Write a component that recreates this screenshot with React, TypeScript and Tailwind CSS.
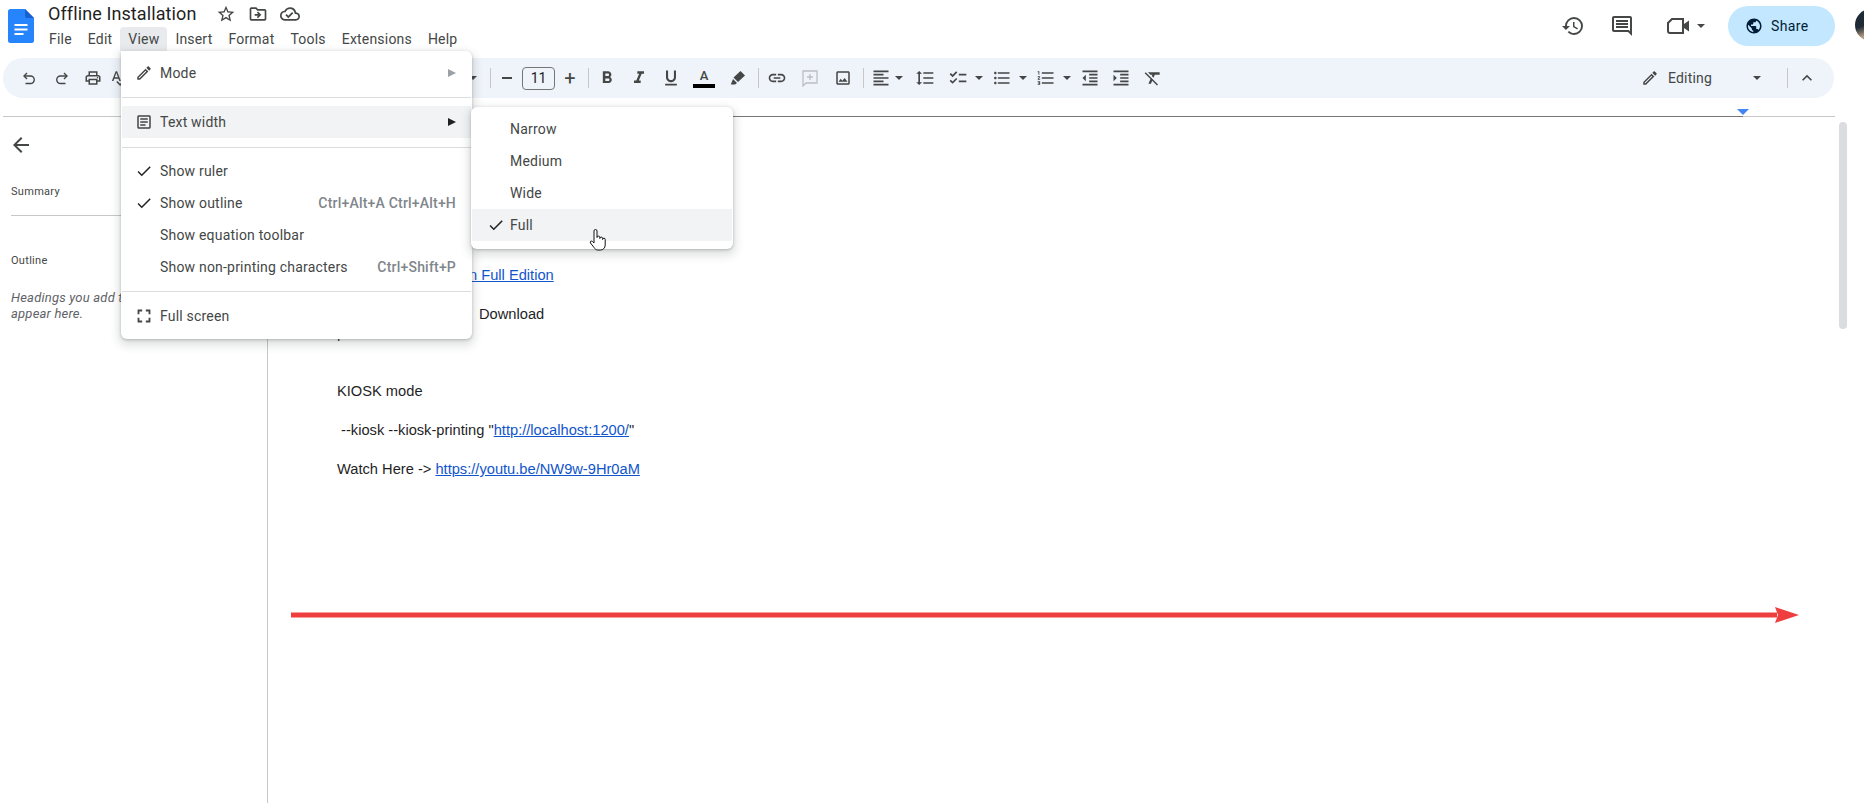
import type { ReactNode } from 'react';
import {
  MdArrowBack,
  MdCheck,
  MdChecklist,
  MdExpandLess,
  MdFormatAlignLeft,
  MdFormatBold,
  MdFormatClear,
  MdFormatIndentDecrease,
  MdFormatIndentIncrease,
  MdFormatItalic,
  MdFormatLineSpacing,
  MdFormatListBulleted,
  MdFormatListNumbered,
  MdFormatUnderlined,
  MdFullscreen,
  MdHistory,
  MdLink,
  MdOutlineArticle,
  MdOutlineCloudDone,
  MdOutlineComment,
  MdOutlineDriveFileMove,
  MdOutlineEdit,
  MdOutlineImage,
  MdOutlinePrint,
  MdPublic,
  MdSpellcheck,
  MdStarBorder,
} from 'react-icons/md';

const menus = ['File', 'Edit', 'View', 'Insert', 'Format', 'Tools', 'Extensions', 'Help'];

function DocsLogo() {
  return (
    <svg width="26" height="34" viewBox="0 0 26 34">
      <path d="M2.5 0H17l9 9v22.5a2.5 2.5 0 0 1-2.5 2.5h-21A2.5 2.5 0 0 1 0 31.5v-29A2.5 2.5 0 0 1 2.5 0z" fill="#2684fc" />
      <path d="M17 0l9 9h-7a2 2 0 0 1-2-2z" fill="#1a5fd0" />
      <path d="M6.5 15h13v2h-13zM6.5 19.5h13v2h-13zM6.5 24h9v2h-9z" fill="#fff" />
    </svg>
  );
}

function UndoIcon({ flip }: { flip?: boolean }) {
  return (
    <svg width="14" height="13" viewBox="0 0 14 13" fill="none" stroke="#444746" strokeWidth="1.4" className={flip ? '-scale-x-100' : ''}>
      <path d="M5 1L2 4l3 3" />
      <path d="M2 4h6.500a3.750 3.750 0 0 1 0 7.500H3.500" />
    </svg>
  );
}

function VideoIcon() {
  return (
    <svg width="22" height="16" viewBox="0 0 22 16" fill="none">
      <path d="M5 1h11v14H3a2 2 0 0 1-2-2V5z" stroke="#444746" strokeWidth="2" />
      <path d="M17 6l5-3.500v11L17 10z" fill="#444746" />
    </svg>
  );
}

function AddCommentIcon() {
  return (
    <svg width="16" height="17" viewBox="0 0 16 17" fill="none" stroke="#bcc0c4" strokeWidth="1.300">
      <path d="M1 1h14v12H4l-3 3z" />
      <path d="M8 4v6M5 7h6" />
    </svg>
  );
}

function Caret({ className = '' }: { className?: string }) {
  return (
    <svg width="8" height="4" viewBox="0 0 8 4" className={className}>
      <path d="M0 0h8L4 4z" fill="#444746" />
    </svg>
  );
}

function Slot({ className, children }: { className: string; children?: ReactNode }) {
  return <div className={`flex h-full shrink-0 items-center justify-center ${className}`}>{children}</div>;
}

function Sep({ className = '' }: { className?: string }) {
  return <div className={`h-5 w-px shrink-0 bg-[#c7c7c7] ${className}`} />;
}

function MenuRow({
  icon,
  label,
  right,
  active,
}: {
  icon?: ReactNode;
  label: string;
  right?: ReactNode;
  active?: boolean;
}) {
  return (
    <div className={`flex h-8 items-center pl-[13px] pr-[15px] ${active ? 'bg-[#f1f3f4]' : ''}`}>
      <div className="flex w-[18px] items-center justify-center">{icon}</div>
      <span className="ml-[7px] text-sm tracking-[0.2px] text-[#444746]">{label}</span>
      <div className="ml-auto flex items-center">{right}</div>
    </div>
  );
}

function Shortcut({ children }: { children: ReactNode }) {
  return <span className="text-sm font-medium tracking-[0.2px] text-[#80868b]">{children}</span>;
}

function Triangle({ color }: { color: string }) {
  return (
    <svg width="8" height="8" viewBox="0 0 8 8">
      <path d="M0 0l8 4-8 4z" fill={color} />
    </svg>
  );
}

function SubRow({ label, active }: { label: string; active?: boolean }) {
  return (
    <div className={`flex h-8 items-center pl-[15px] ${active ? 'bg-[#f1f3f4]' : ''}`}>
      <div className="flex w-[18px] items-center justify-center">
        {active && <MdCheck size={18} color="#202124" />}
      </div>
      <span className="ml-[5px] text-sm tracking-[0.2px] text-[#444746]">{label}</span>
    </div>
  );
}

function Toolbar() {
  const c = '#444746';
  return (
    <div className="mx-[3px] flex h-10 w-[1831px] items-center rounded-[20px] bg-[#eff3fa] pl-3 pr-[17px]">
      <Slot className="w-7"><UndoIcon /></Slot>
      <Slot className="w-[38px]"><UndoIcon flip /></Slot>
      <Slot className="w-6"><MdOutlinePrint size={18} color={c} /></Slot>
      <Slot className="w-7"><MdSpellcheck size={18} color={c} /></Slot>
      <div className="w-[332px] shrink-0" />
      <Slot className="w-4"><Caret /></Slot>
      <Slot className="w-[18px]"><Sep /></Slot>
      <Slot className="w-4"><div className="h-0.5 w-2.5 bg-[#444746]" /></Slot>
      <div className="ml-[7px] flex h-[23px] w-[33px] shrink-0 items-center justify-center rounded-[4px] border border-[#747775] text-sm text-[#1f1f1f]">
        11
      </div>
      <Slot className="w-[30px] text-xl leading-none text-[#444746]">+</Slot>
      <Slot className="w-1.5"><Sep /></Slot>
      <Slot className="w-8"><MdFormatBold size={20} color={c} /></Slot>
      <Slot className="w-8"><MdFormatItalic size={20} color={c} /></Slot>
      <Slot className="w-8"><MdFormatUnderlined size={20} color={c} /></Slot>
      <Slot className="w-[34px] flex-col">
        <span className="text-[13px] font-medium leading-[14px] text-[#444746]">A</span>
        <div className="mt-px h-1 w-[22px] bg-black" />
      </Slot>
      <Slot className="w-[34px]">
        <svg width="16" height="16" viewBox="0 0 16 16">
          <path d="M10.500 1l4.500 4.500-7 6.500-4.500-4.500zM3 9l4 4-2 1.500H.8z" fill={c} />
        </svg>
      </Slot>
      <Slot className="w-1.5"><Sep /></Slot>
      <Slot className="w-8"><MdLink size={20} color={c} /></Slot>
      <Slot className="w-[34px]"><AddCommentIcon /></Slot>
      <Slot className="w-8"><MdOutlineImage size={18} color={c} /></Slot>
      <Slot className="ml-px w-1.5"><Sep /></Slot>
      <Slot className="ml-0.5 w-[26px]"><MdFormatAlignLeft size={20} color={c} /></Slot>
      <Slot className="w-2.5"><Caret /></Slot>
      <Slot className="w-[42px]"><MdFormatLineSpacing size={20} color={c} /></Slot>
      <Slot className="w-6"><MdChecklist size={20} color={c} /></Slot>
      <Slot className="w-[18px]"><Caret /></Slot>
      <Slot className="w-7"><MdFormatListBulleted size={20} color={c} /></Slot>
      <Slot className="w-3.5"><Caret /></Slot>
      <Slot className="w-8"><MdFormatListNumbered size={20} color={c} /></Slot>
      <Slot className="w-2.5"><Caret /></Slot>
      <Slot className="w-9"><MdFormatIndentDecrease size={20} color={c} /></Slot>
      <Slot className="w-[26px]"><MdFormatIndentIncrease size={20} color={c} /></Slot>
      <Slot className="w-[38px]"><MdFormatClear size={20} color={c} /></Slot>
      <div className="flex-1" />
      <Slot className="w-5"><MdOutlineEdit size={18} color={c} /></Slot>
      <span className="ml-2 w-[81px] shrink-0 text-sm tracking-[0.2px] text-[#444746]">Editing</span>
      <Slot className="w-4"><Caret /></Slot>
      <Sep className="ml-[22px]" />
      <Slot className="ml-[9px] w-5"><MdExpandLess size={22} color={c} /></Slot>
    </div>
  );
}

export default function App() {
  return (
    <div className="relative h-[803px] w-[1864px] overflow-hidden bg-white font-['Roboto',sans-serif]">
      {/* header */}
      <div className="flex h-[58px]">
        <div className="ml-2 mt-[9px] shrink-0">
          <DocsLogo />
        </div>
        <div className="ml-[14px]">
          <div className="flex h-[27px] items-center">
            <span className="w-[147px] whitespace-nowrap text-lg leading-none tracking-[0.1px] text-[#1f1f1f]">Offline Installation</span>
            <MdStarBorder size={20} color="#444746" className="ml-[21px]" />
            <MdOutlineDriveFileMove size={20} color="#444746" className="ml-3" />
            <MdOutlineCloudDone size={20} color="#444746" className="ml-3" />
          </div>
          <div className="-ml-[7px] flex h-6">
            {menus.map((m) => (
              <div
                key={m}
                className={`flex items-center rounded-t-[4px] px-2 text-sm tracking-[0.2px] text-[#444746] ${m === 'View' ? 'bg-[#e8eaed]' : ''}`}
              >
                {m}
              </div>
            ))}
          </div>
        </div>
        <div className="-mr-[23px] ml-auto flex h-[46px] shrink-0 items-start pt-[6px]">
          <div className="flex h-10 items-center">
            <MdHistory size={24} color="#444746" />
            <MdOutlineComment size={24} color="#444746" className="ml-[25px]" />
            <div className="ml-[33px]"><VideoIcon /></div>
            <Caret className="ml-2" />
          </div>
          <div className="ml-[23px] flex h-10 w-[107px] items-center rounded-[20px] bg-[#c2e7ff] pl-[17px]">
            <MdPublic size={18} color="#001d35" />
            <span className="ml-2 text-sm tracking-[0.4px] text-[#001d35]">Share</span>
          </div>
          <div className="ml-5 mt-[3px] h-8 w-8 rounded-full bg-[linear-gradient(160deg,#1e2b36_45%,#b59c80_70%)]" />
        </div>
      </div>

      <Toolbar />

      {/* ruler */}
      <div className="flex h-5 items-end pb-px pl-[3px]">
        <div className="h-px w-[264px] bg-[#c7c7c7]" />
        <div className="h-px w-[1476px] bg-[#757575]" />
        <div className="h-px w-[92px] bg-[#c7c7c7]" />
      </div>

      {/* sidebar + document */}
      <div className="flex h-[685px]">
        <div className="w-[268px] shrink-0 border-r border-[#c7c7c7] pt-[15px]">
          <div className="ml-[9px]">
            <MdArrowBack size={24} color="#444746" />
          </div>
          <div className="ml-[11px] mt-[27px] text-[11px] leading-4 tracking-[0.3px] text-[#444746]">Summary</div>
          <div className="ml-[11px] mt-[15px] h-px w-[240px] bg-[#c7c7c7]" />
          <div className="ml-[11px] mt-[37px] text-[11px] leading-4 tracking-[0.3px] text-[#444746]">Outline</div>
          <div className="ml-[11px] mt-[21px] w-[250px] text-[13px] italic leading-4 tracking-[0.2px] text-[#5f6368]">
            Headings you add to the document will appear here.
          </div>
        </div>
        <div className="pl-[69px] pt-[148px] font-['Liberation_Sans',Arial,sans-serif] text-[14.67px] leading-[19px] text-[#1f1f1f]">
          <div className="pl-[132px] text-[#1155cc] underline">n Full Edition</div>
          <div className="mt-5 pl-[142px]">Download</div>
          <div>p</div>
          <div className="mt-[39px]">KIOSK mode</div>
          <div className="mt-5 whitespace-pre">
            {' --kiosk --kiosk-printing "'}
            <span className="text-[#1155cc] underline">http://localhost:1200/</span>"
          </div>
          <div className="mt-5 whitespace-pre">
            {'Watch Here -> '}
            <span className="text-[#1155cc] underline">https://youtu.be/NW9w-9Hr0aM</span>
          </div>
        </div>
      </div>

      {/* ruler marker */}
      <svg width="12" height="6" viewBox="0 0 12 6" className="absolute left-[1737px] top-[109px]">
        <path d="M0 0h12L6 6z" fill="#4285f4" />
      </svg>

      {/* scrollbar thumb */}
      <div className="absolute left-[1839px] top-[122px] h-[207px] w-2 rounded bg-[#dadce0]" />

      {/* red annotation arrow */}
      <svg width="1509" height="16" viewBox="0 0 1509 16" className="absolute left-[291px] top-[607px]">
        <path d="M0 5.500h1486v5H0z" fill="#ef3e3e" />
        <path d="M1484 0l24 8-24 8 3-8z" fill="#ef3e3e" />
      </svg>

      {/* View menu */}
      <div className="absolute left-[121px] top-[51px] w-[351px] rounded-b-md rounded-tr-md bg-white px-px pb-[7px] pt-[6px] shadow-[0_1px_3px_rgba(60,64,67,0.3),0_4px_8px_3px_rgba(60,64,67,0.15)]">
        <MenuRow icon={<MdOutlineEdit size={18} color="#444746" />} label="Mode" right={<Triangle color="#9aa0a6" />} />
        <div className="my-2 h-px bg-[#dadce0]" />
        <MenuRow icon={<MdOutlineArticle size={18} color="#444746" />} label="Text width" right={<Triangle color="#202124" />} active />
        <div className="mb-[7px] mt-[9px] h-px bg-[#dadce0]" />
        <MenuRow icon={<MdCheck size={18} color="#202124" />} label="Show ruler" />
        <MenuRow icon={<MdCheck size={18} color="#202124" />} label="Show outline" right={<Shortcut>Ctrl+Alt+A Ctrl+Alt+H</Shortcut>} />
        <MenuRow label="Show equation toolbar" />
        <MenuRow label="Show non-printing characters" right={<Shortcut>Ctrl+Shift+P</Shortcut>} />
        <div className="my-2 h-px bg-[#dadce0]" />
        <MenuRow icon={<MdFullscreen size={22} color="#444746" className="shrink-0" />} label="Full screen" />
      </div>

      {/* Text width submenu */}
      <div className="absolute left-[471px] top-[107px] h-[142px] w-[262px] rounded-md bg-white px-px pt-[6px] shadow-[0_1px_3px_rgba(60,64,67,0.3),0_4px_8px_3px_rgba(60,64,67,0.15)]">
        <SubRow label="Narrow" />
        <SubRow label="Medium" />
        <SubRow label="Wide" />
        <SubRow label="Full" active />
      </div>

      {/* mouse cursor */}
      <svg width="18" height="24" viewBox="0 0 18 24" className="absolute left-[589px] top-[228px]">
        <path
          d="M5 14V3a1.500 1.500 0 0 1 3 0v6.500a1.400 1.400 0 0 1 2.800 0v1a1.400 1.400 0 0 1 2.800 0v1a1.300 1.300 0 0 1 2.600 0V17c0 3-2 5-5 5H9c-2 0-3-1-4-2.500L1.500 15c-1-1.500.8-2.500 2-1.500L5 15z"
          fill="#fff"
          stroke="#111"
          strokeWidth="1"
        />
      </svg>
    </div>
  );
}
